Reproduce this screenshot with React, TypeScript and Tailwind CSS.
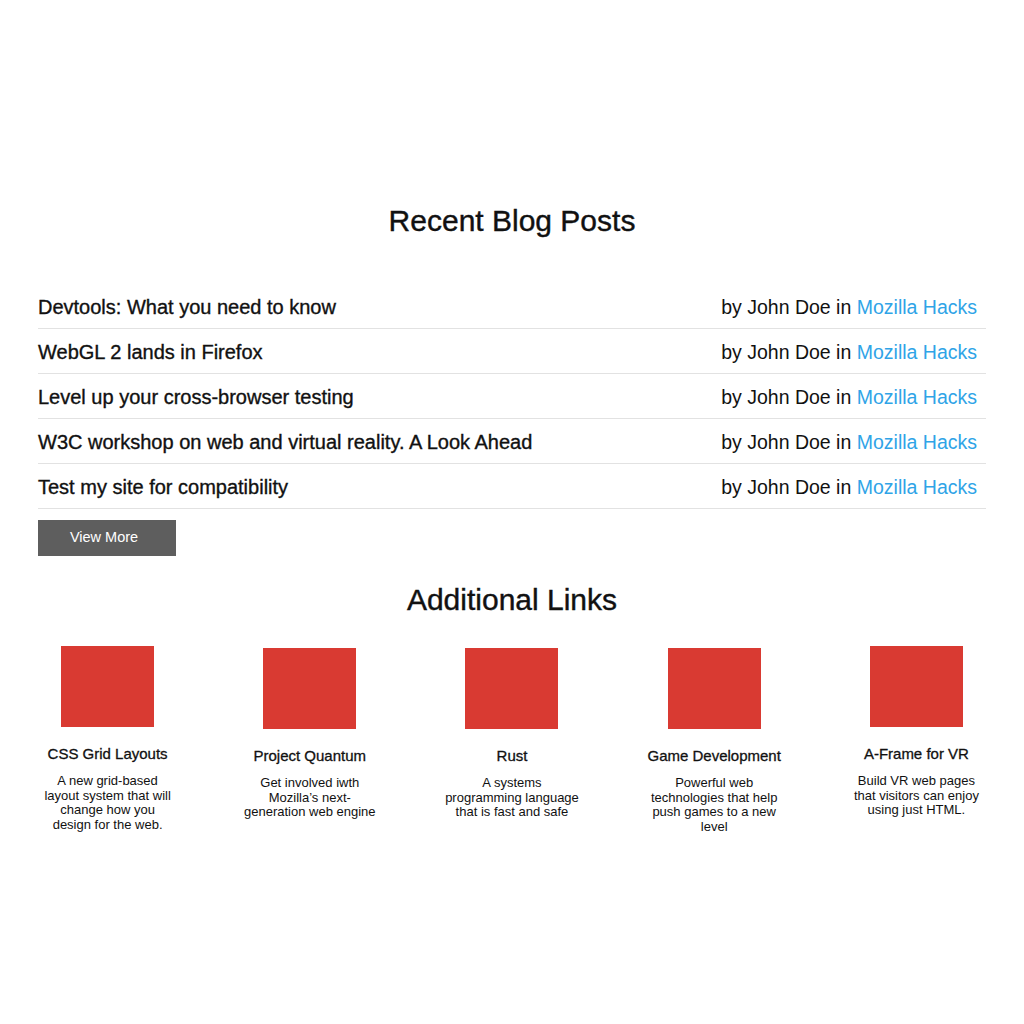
const posts = [
  "Devtools: What you need to know",
  "WebGL 2 lands in Firefox",
  "Level up your cross-browser testing",
  "W3C workshop on web and virtual reality. A Look Ahead",
  "Test my site for compatibility",
];

const links = [
  {
    title: "CSS Grid Layouts",
    text: "A new grid-based layout system that will change how you design for the web.",
    lower: false,
  },
  {
    title: "Project Quantum",
    text: "Get involved iwth Mozilla’s next-generation web engine",
    lower: true,
  },
  {
    title: "Rust",
    text: "A systems programming language that is fast and safe",
    lower: true,
  },
  {
    title: "Game Development",
    text: "Powerful web technologies that help push games to a new level",
    lower: true,
  },
  {
    title: "A-Frame for VR",
    text: "Build VR web pages that visitors can enjoy using just HTML.",
    lower: false,
  },
];

export default function App() {
  return (
    <div
      className="min-h-[1024px] bg-white px-[38px] pt-[203px] text-[#111]"
      style={{ fontFamily: '"Liberation Sans", Arial, sans-serif' }}
    >
      <h1 className="text-center text-[30px] leading-[36px] [-webkit-text-stroke:0.4px]">
        Recent Blog Posts
      </h1>

      <ul className="mt-[45px]">
        {posts.map((title) => (
          <li
            key={title}
            className="flex items-center justify-between border-b border-[#e2e2e2] pt-[11px] pb-[9px] pr-[9px] text-[20px] leading-[24px]"
          >
            <span className="[-webkit-text-stroke:0.35px]">{title}</span>
            <span className="text-[19.5px]">
              by John Doe in{" "}
              <a href="#" className="text-[#2fa4e7]">
                Mozilla Hacks
              </a>
            </span>
          </li>
        ))}
      </ul>

      <button className="mt-[11px] h-[36px] w-[138px] bg-[#5e5e5e] pr-[6px] text-[14.5px] text-white">
        View More
      </button>

      <h2 className="mt-[26px] text-center text-[30px] leading-[36px] [-webkit-text-stroke:0.4px]">
        Additional Links
      </h2>

      <div className="mt-[28px] grid grid-cols-5 gap-x-[63px]">
        {links.map((link) => (
          <div
            key={link.title}
            className={`flex flex-col items-center text-center ${link.lower ? "pt-[2px]" : ""}`}
          >
            <div className="h-[81px] w-[93px] bg-[#d93a32]" />
            <h3 className="mt-[18px] text-[15px] leading-[18px] [-webkit-text-stroke:0.3px]">
              {link.title}
            </h3>
            <p className="mt-[11px] w-[136px] text-[13px] leading-[14.7px]">
              {link.text}
            </p>
          </div>
        ))}
      </div>
    </div>
  );
}
